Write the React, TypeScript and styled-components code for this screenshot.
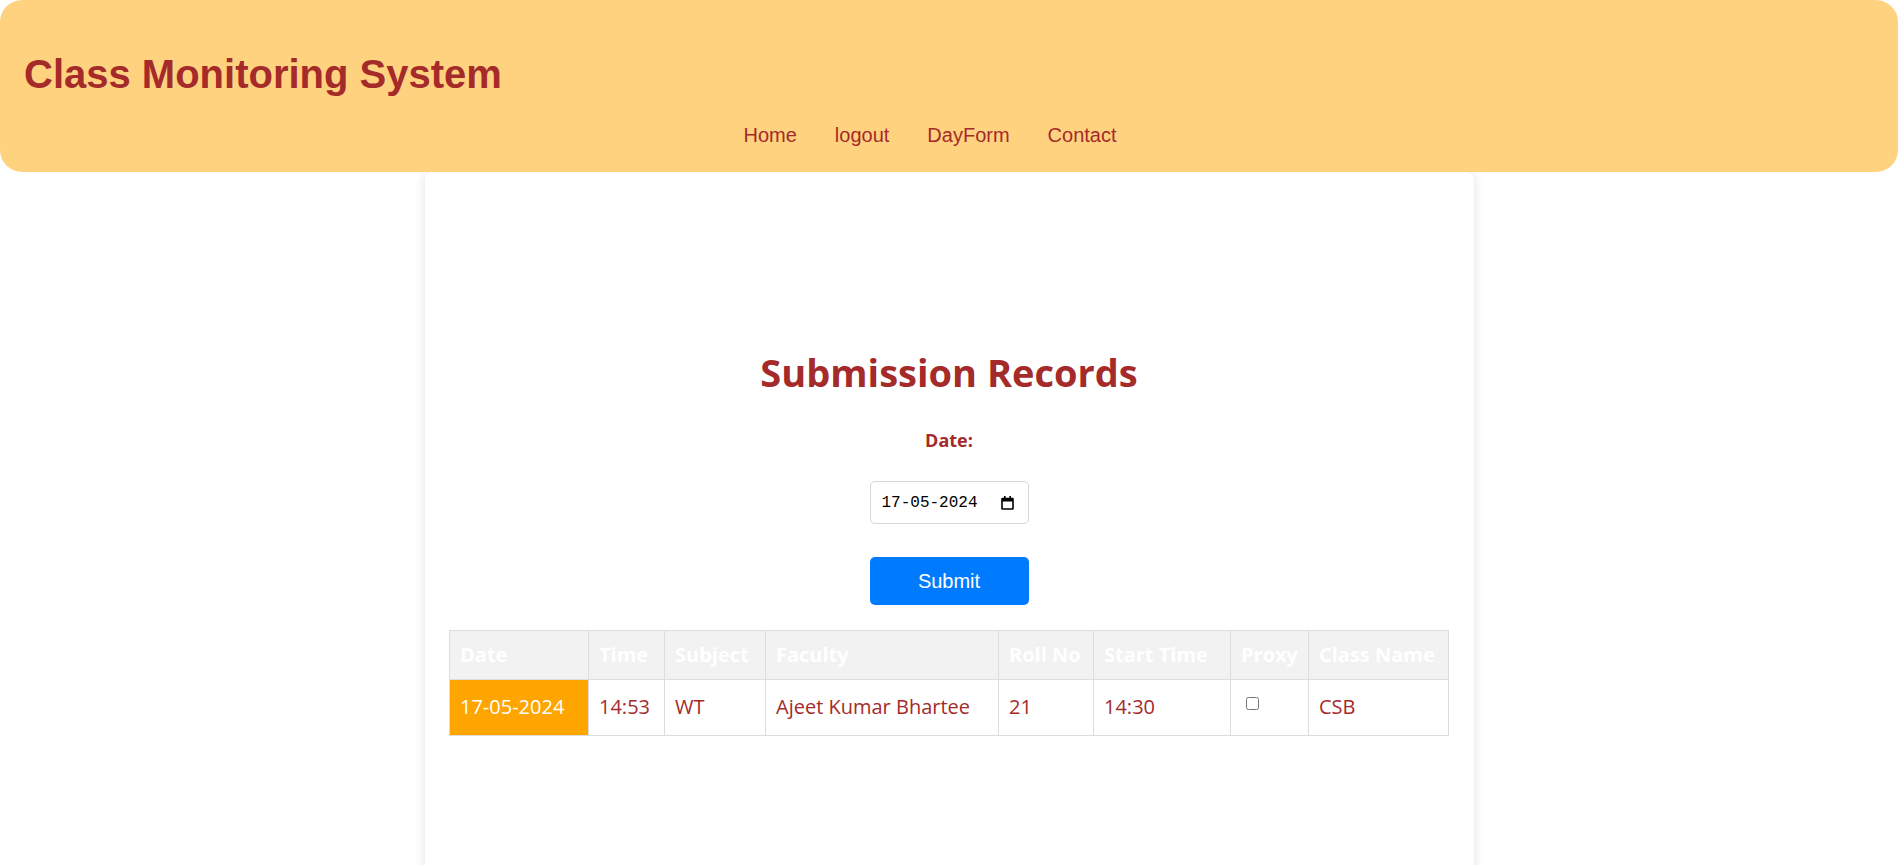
import React, { FC } from 'react';
import styled, { createGlobalStyle } from 'styled-components';

const GlobalStyle = createGlobalStyle`
  body {
    margin: 0;
    background: #fff;
    font-family: 'Liberation Sans', Arial, sans-serif;
  }
`;

const comic = `'Comic Sans MS', 'Open Sans', sans-serif`;
const brown = '#a52a2a';

const Header = styled.header`
  position: relative;
  z-index: 1;
  background: #ffd280;
  border-radius: 22px;
  padding: 50px 24px 25px;
  display: flex;
  flex-direction: column;
  gap: 25px;
`;

const Brand = styled.h1`
  margin: 0;
  font-size: 40px;
  line-height: 48px;
  font-weight: 700;
  color: ${brown};
`;

const Nav = styled.nav`
  display: flex;
  justify-content: center;
`;

const NavLink = styled.a`
  margin-right: 38px;
  font-size: 20px;
  line-height: 24px;
  color: ${brown};
  text-decoration: none;
  cursor: pointer;
`;

const Card = styled.main`
  width: 1049px;
  min-height: 720px;
  margin: 0 auto;
  box-sizing: border-box;
  padding: 174px 25px 40px;
  background: #fff;
  border-radius: 8px;
  box-shadow: 0 0 12px rgba(0, 0, 0, 0.12);
  display: flex;
  flex-direction: column;
  align-items: center;
  font-family: ${comic};
`;

const Title = styled.h2`
  margin: 0;
  font-size: 38px;
  line-height: 52px;
  font-weight: 700;
  color: ${brown};
`;

const Label = styled.label`
  margin-top: 28px;
  font-size: 18px;
  line-height: 28px;
  font-weight: 700;
  color: ${brown};
`;

const DateField = styled.div`
  margin-top: 27px;
  width: 159px;
  height: 43px;
  box-sizing: border-box;
  border: 1px solid #d6d6d6;
  border-radius: 5px;
  padding: 0 14px 0 11px;
  display: flex;
  align-items: center;
  justify-content: space-between;
  font-family: 'Liberation Mono', 'DejaVu Sans Mono', monospace;
  font-size: 16px;
  color: #000;
`;

const SubmitButton = styled.button`
  margin-top: 33px;
  width: 159px;
  height: 48px;
  border: none;
  border-radius: 5px;
  background: #007bff;
  color: #fff;
  font-family: 'Liberation Sans', Arial, sans-serif;
  font-size: 20px;
  cursor: pointer;
`;

const Table = styled.table`
  margin-top: 25px;
  width: 999px;
  table-layout: fixed;
  border-collapse: collapse;
  font-size: 20px;
  line-height: 28px;
`;

const Th = styled.th`
  background: #f2f2f2;
  color: #fff;
  font-weight: 700;
  text-align: left;
  white-space: nowrap;
  overflow: hidden;
  padding: 10px 10px;
  border: 1px solid #ddd;
`;

const Td = styled.td<{ $highlight?: boolean }>`
  padding: 13px 10px 14px;
  border: 1px solid #ddd;
  text-align: left;
  vertical-align: top;
  white-space: nowrap;
  overflow: hidden;
  color: ${({ $highlight }) => ($highlight ? '#fff' : brown)};
  background: ${({ $highlight }) => ($highlight ? '#ffa500' : '#fff')};
`;

const Check = styled.input`
  display: block;
  margin: 4px 0 0 5px;
  width: 13px;
  height: 13px;
`;

const CalendarIcon: FC = () => (
  <svg width="13" height="14" viewBox="0 0 13 14" fill="none">
    <rect x="1" y="2.5" width="11" height="10.5" rx="0.5" stroke="#000" strokeWidth="1.6" />
    <rect x="1" y="2.5" width="11" height="3" fill="#000" />
    <rect x="3" y="0" width="1.6" height="3" fill="#000" />
    <rect x="8.4" y="0" width="1.6" height="3" fill="#000" />
  </svg>
);

const columns = [
  { label: 'Date', width: 139 },
  { label: 'Time', width: 76 },
  { label: 'Subject', width: 101 },
  { label: 'Faculty', width: 233 },
  { label: 'Roll No', width: 95 },
  { label: 'Start Time', width: 137 },
  { label: 'Proxy', width: 78 },
  { label: 'Class Name', width: 140 },
];

const records = [
  {
    date: '17-05-2024',
    time: '14:53',
    subject: 'WT',
    faculty: 'Ajeet Kumar Bhartee',
    rollNo: '21',
    startTime: '14:30',
    proxy: false,
    className: 'CSB',
  },
];

const App: FC = () => {
  return (
    <>
      <GlobalStyle />
      <Header>
        <Brand>Class Monitoring System</Brand>
        <Nav>
          <NavLink>Home</NavLink>
          <NavLink>logout</NavLink>
          <NavLink>DayForm</NavLink>
          <NavLink>Contact</NavLink>
        </Nav>
      </Header>
      <Card>
        <Title>Submission Records</Title>
        <Label>Date:</Label>
        <DateField>
          <span>17-05-2024</span>
          <CalendarIcon />
        </DateField>
        <SubmitButton type="button">Submit</SubmitButton>
        <Table>
          <colgroup>
            {columns.map((c) => (
              <col key={c.label} width={c.width} />
            ))}
          </colgroup>
          <thead>
            <tr>
              {columns.map((c) => (
                <Th key={c.label}>{c.label}</Th>
              ))}
            </tr>
          </thead>
          <tbody>
            {records.map((r) => (
              <tr key={r.date + r.time}>
                <Td $highlight>{r.date}</Td>
                <Td>{r.time}</Td>
                <Td>{r.subject}</Td>
                <Td>{r.faculty}</Td>
                <Td>{r.rollNo}</Td>
                <Td>{r.startTime}</Td>
                <Td>
                  <Check type="checkbox" defaultChecked={r.proxy} />
                </Td>
                <Td>{r.className}</Td>
              </tr>
            ))}
          </tbody>
        </Table>
      </Card>
    </>
  );
};

export default App;
